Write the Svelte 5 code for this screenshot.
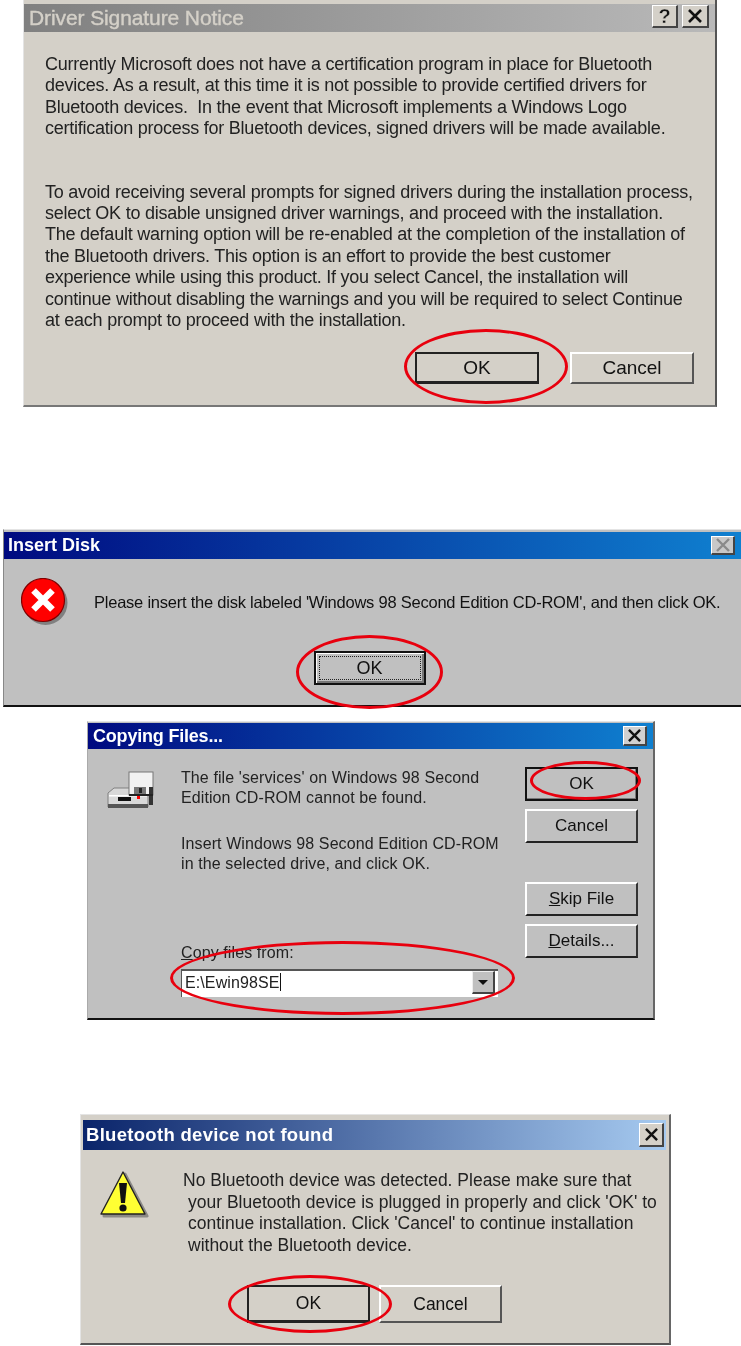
<script lang="ts">
  const signatureLines = [
    ['Currently Microsoft does not have a certification program in place for Bluetooth', 'devices. As a result, at this time it is not possible to provide certified drivers for', 'Bluetooth devices.  In the event that Microsoft implements a Windows Logo', 'certification process for Bluetooth devices, signed drivers will be made available.'],
    ['To avoid receiving several prompts for signed drivers during the installation process,', 'select OK to disable unsigned driver warnings, and proceed with the installation.', 'The default warning option will be re-enabled at the completion of the installation of', 'the Bluetooth drivers. This option is an effort to provide the best customer', 'experience while using this product. If you select Cancel, the installation will', 'continue without disabling the warnings and you will be required to select Continue', 'at each prompt to proceed with the installation.']
  ];
</script>

<main class="page">
  <!-- Driver signature notice -->
  <section class="dialog notice">
    <header class="title grey">
      <span>Driver Signature Notice</span>
      <div class="title-btns">
        <span class="cap help">?</span>
        <span class="cap close">
          <svg viewBox="0 0 16 14" width="16" height="14"><path d="M2 1 14 13M14 1 2 13" stroke="#111" stroke-width="2.6" /></svg>
        </span>
      </div>
    </header>
    <div class="notice-body">
      {#each signatureLines as para}
        <p>{#each para as line}{line}<br />{/each}</p>
      {/each}
    </div>
    <div class="notice-actions">
      <button class="btn default-soft">OK</button>
      <button class="btn soft">Cancel</button>
    </div>
    <span class="ring ring-notice"></span>
  </section>

  <!-- Insert disk -->
  <section class="dialog insert">
    <header class="title blue">
      <span>Insert Disk</span>
      <span class="cap disabled">
        <svg viewBox="0 0 16 14" width="16" height="14"><path d="M2 1 14 13M14 1 2 13" stroke="#8a8a8a" stroke-width="2.4" /></svg>
      </span>
    </header>
    <div class="insert-row">
      <svg class="err" viewBox="0 0 48 48" width="48" height="48">
        <circle cx="24.5" cy="25" r="22" fill="#808080" />
        <circle cx="22" cy="22" r="21.5" fill="#f00" stroke="#800000" stroke-width="1.2" />
        <path d="M12.5 12.5 31.5 31.5M31.5 12.5 12.5 31.5" stroke="#fff" stroke-width="6.5" />
      </svg>
      <p>Please insert the disk labeled 'Windows 98 Second Edition CD-ROM', and then click OK.</p>
    </div>
    <div class="insert-actions">
      <button class="btn focus"><span>OK</span></button>
    </div>
    <span class="ring ring-insert"></span>
  </section>

  <!-- Copying files -->
  <section class="dialog copying">
    <header class="title blue">
      <span>Copying Files...</span>
      <span class="cap">
        <svg viewBox="0 0 16 14" width="15" height="13"><path d="M2 1 14 13M14 1 2 13" stroke="#111" stroke-width="2.6" /></svg>
      </span>
    </header>
    <div class="copying-main">
      <svg class="drive" viewBox="0 0 48 38" width="48" height="38">
        <path d="M8 17h34v19H2V22z" fill="#d8d8d8" stroke="#808080" />
        <rect x="2" y="33" width="40" height="4" fill="#555" />
        <rect x="3" y="24" width="38" height="1.5" fill="#fff" />
        <rect x="12" y="26" width="13" height="4" fill="#111" />
        <rect x="23" y="1" width="24" height="23" fill="#f2f2f2" stroke="#777" />
        <rect x="28" y="16" width="12" height="8" fill="#777" />
        <rect x="33" y="17" width="3" height="5" fill="#222" />
        <rect x="43" y="16" width="4" height="18" fill="#333" />
        <rect x="23" y="23" width="24" height="2" fill="#222" />
        <rect x="31" y="25" width="3" height="3" fill="#f00" />
      </svg>
      <div class="copying-text">
        <p>The file 'services' on Windows 98 Second<br />Edition CD-ROM cannot be found.</p>
        <p>Insert Windows 98 Second Edition CD-ROM<br />in the selected drive, and click OK.</p>
        <label for="src"><u>C</u>opy files from:</label>
        <div class="combo">
          <span id="src">E:\Ewin98SE<i></i></span>
          <span class="arrow"><b></b></span>
        </div>
      </div>
      <div class="copying-actions">
        <button class="btn dark">OK</button>
        <button class="btn">Cancel</button>
        <button class="btn skip"><u>S</u>kip File</button>
        <button class="btn"><u>D</u>etails...</button>
      </div>
    </div>
    <span class="ring ring-ok"></span>
    <span class="ring ring-combo"></span>
  </section>

  <!-- Device not found -->
  <section class="dialog missing">
    <header class="title navy">
      <span>Bluetooth device not found</span>
      <span class="cap">
        <svg viewBox="0 0 16 14" width="15" height="13"><path d="M2 1 14 13M14 1 2 13" stroke="#111" stroke-width="2.6" /></svg>
      </span>
    </header>
    <div class="missing-row">
      <svg class="warn" viewBox="0 0 50 50" width="50" height="50">
        <path d="M26 4 48 46H5z" fill="#8c8a86" stroke="#8c8a86" stroke-width="3" stroke-linejoin="round" />
        <path d="M24 2 46 44H2z" fill="#ffff33" stroke="#222" stroke-width="1.4" stroke-linejoin="round" />
        <path d="M20 13h8l-2 20h-4z" fill="#111" />
        <circle cx="24" cy="38" r="3.6" fill="#111" />
      </svg>
      <p>
        No Bluetooth device was detected. Please make sure that<br />
        <span>your Bluetooth device is plugged in properly and click 'OK' to</span><br />
        <span>continue installation. Click 'Cancel' to continue installation</span><br />
        <span>without the Bluetooth device.</span>
      </p>
    </div>
    <div class="missing-actions">
      <button class="btn default-soft">OK</button>
      <button class="btn soft">Cancel</button>
    </div>
    <span class="ring ring-missing"></span>
  </section>
</main>

<style>
  :global(body) {
    margin: 0;
    background: #fff;
  }

  .page {
    width: 741px;
    height: 1346px;
    display: flex;
    flex-direction: column;
    overflow: hidden;
    font-family: "Liberation Sans", Arial, sans-serif;
    color: #111;
  }

  p {
    margin: 0;
  }

  svg {
    flex: none;
  }

  .dialog {
    position: relative;
    box-sizing: border-box;
    flex: none;
    background: #c0c0c0;
    border-top: 1px solid #e4e4e4;
    border-left: 1px solid #e4e4e4;
    border-right: 2px solid #444;
    border-bottom: 2px solid #222;
    filter: blur(0.45px);
  }

  .title {
    display: flex;
    align-items: center;
    justify-content: space-between;
    box-sizing: border-box;
    color: #fff;
    font-weight: 700;
    white-space: nowrap;
  }

  .blue {
    background: linear-gradient(90deg, #000a80, #0f80d0);
  }

  .grey {
    background: linear-gradient(90deg, #808080, #b9b9b9);
    color: #d4d0c8;
  }

  .navy {
    background: linear-gradient(90deg, #0a246a, #a6caf0);
  }

  .cap {
    display: flex;
    align-items: center;
    justify-content: center;
    box-sizing: border-box;
    background: #d4d0c8;
    border-top: 1px solid #fff;
    border-left: 1px solid #fff;
    border-right: 2px solid #444;
    border-bottom: 2px solid #444;
    color: #111;
    font-weight: 700;
  }

  .btn {
    box-sizing: border-box;
    display: flex;
    align-items: center;
    justify-content: center;
    padding: 0;
    background: #c0c0c0;
    border-top: 2px solid #fff;
    border-left: 2px solid #fff;
    border-right: 2px solid #333;
    border-bottom: 2px solid #222;
    border-radius: 0;
    font-family: inherit;
    color: #111;
  }

  .ring {
    position: absolute;
    box-sizing: border-box;
    border: 3px solid #e8000e;
    border-radius: 50%;
    pointer-events: none;
  }

  /* notice */
  .notice {
    width: 694px;
    height: 407px;
    margin-left: 23px;
    padding-top: 3px;
    background: #d4d0c8;
    border-right-color: #555;
    border-bottom-color: #777;
    border-top: 0;
  }

  .notice .title {
    height: 28px;
    margin-top: 1px;
    padding: 0 6px 0 5px;
    font-size: 21px;
    letter-spacing: -0.1px;
    font-weight: 400;
    -webkit-text-stroke: 0.4px #d4d0c8;
  }

  .title-btns {
    display: flex;
    gap: 4px;
    margin-bottom: 3px;
  }

  .notice .cap {
    width: 27px;
    height: 23px;
    font-size: 20px;
  }

  .notice .help {
    width: 26px;
  }

  .notice-body {
    padding: 22px 0 0 21px;
    font-size: 18px;
    line-height: 21.4px;
    letter-spacing: -0.24px;
    white-space: pre;
    color: #222;
  }

  .notice-body p + p {
    margin-top: 42px;
  }

  .notice-actions {
    display: flex;
    justify-content: flex-end;
    gap: 31px;
    padding: 21px 21px 0 0;
  }

  .notice-actions .btn {
    width: 124px;
    height: 32px;
    background: #d4d0c8;
    font-size: 19px;
  }

  .default-soft {
    border: 2px solid #222 !important;
    border-bottom-width: 3px !important;
  }

  .soft {
    border-right-color: #555 !important;
    border-bottom-color: #555 !important;
  }

  .ring-notice {
    left: 380px;
    top: 329px;
    width: 164px;
    height: 75px;
  }

  /* insert */
  .insert {
    width: 738px;
    height: 178px;
    margin: 122px 0 0 3px;
    padding-top: 2px;
    border-right: 0;
    border-left: 1px solid #888;
    border-bottom-color: #111;
  }

  .insert .title {
    height: 27px;
    padding: 0 6px 0 4px;
    font-size: 18px;
  }

  .insert .cap {
    width: 24px;
    height: 19px;
    background: #c8c8c8;
  }

  .insert-row {
    display: flex;
    align-items: center;
    height: 86px;
    padding-left: 17px;
    gap: 25px;
  }

  .insert-row p {
    font-size: 16.5px;
    letter-spacing: -0.235px;
    white-space: nowrap;
  }

  .insert-actions {
    display: flex;
    justify-content: center;
    margin: 6px 0 0 -6px;
  }

  .insert-actions .btn {
    width: 112px;
    height: 34px;
    font-size: 18px;
  }

  .focus {
    border: 2px solid #111;
    box-shadow: inset 1px 1px 0 #fff, inset -2px -2px 0 #777;
  }

  .focus span {
    width: 100px;
    height: 22px;
    line-height: 22px;
    border: 1px dotted #222;
    text-align: center;
  }

  .ring-insert {
    left: 292px;
    top: 105px;
    width: 147px;
    height: 74px;
  }

  /* copying */
  .copying {
    width: 568px;
    height: 299px;
    margin: 14px 0 0 87px;
    padding-top: 1px;
    border-left-color: #aaa;
    border-right-color: #666;
    border-bottom-color: #111;
  }

  .copying .title {
    height: 26px;
    padding: 0 6px 0 5px;
    font-size: 18px;
    letter-spacing: -0.2px;
  }

  .copying .cap {
    width: 24px;
    height: 20px;
    background: #d0d0d0;
  }

  .copying-main {
    display: flex;
    padding: 19px 0 0 18px;
  }

  .drive {
    margin: 3px 27px 0 0;
  }

  .copying-text {
    width: 317px;
    font-size: 16px;
    line-height: 20px;
    letter-spacing: 0.1px;
    white-space: nowrap;
    color: #222;
  }

  .copying-text p + p {
    margin-top: 26px;
  }

  .copying-text label {
    display: block;
    margin-top: 69px;
  }

  .combo {
    display: flex;
    align-items: center;
    justify-content: space-between;
    box-sizing: border-box;
    height: 28px;
    margin-top: 6px;
    padding: 0 3px 3px 3px;
    background: #fff;
    border-top: 2px solid #555;
    border-left: 1px solid #555;
  }

  .combo i {
    display: inline-block;
    width: 1px;
    height: 18px;
    margin-left: 1px;
    vertical-align: -3px;
    background: #111;
  }

  .arrow {
    display: flex;
    align-items: center;
    justify-content: center;
    box-sizing: border-box;
    width: 23px;
    height: 23px;
    background: #c0c0c0;
    border-top: 1px solid #eee;
    border-left: 1px solid #eee;
    border-right: 2px solid #444;
    border-bottom: 2px solid #444;
  }

  .arrow b {
    width: 0;
    height: 0;
    border-left: 5px solid transparent;
    border-right: 5px solid transparent;
    border-top: 5px solid #111;
  }

  .copying-actions {
    display: flex;
    flex-direction: column;
    gap: 8px;
    margin: -1px 0 0 27px;
  }

  .copying-actions .btn {
    width: 113px;
    height: 34px;
    font-size: 17px;
  }

  .copying-actions .skip {
    margin-top: 31px;
  }

  .dark {
    border: 2px solid #111;
    box-shadow: inset -1px -1px 0 #777;
  }

  .ring-ok {
    left: 442px;
    top: 39px;
    width: 111px;
    height: 39px;
  }

  .ring-combo {
    left: 82px;
    top: 219px;
    width: 345px;
    height: 74px;
  }

  /* missing */
  .missing {
    width: 591px;
    height: 231px;
    margin: 94px 0 0 80px;
    padding: 5px 3px 0 2px;
    background: #d4d0c8;
    border-right-color: #666;
    border-bottom-color: #555;
  }

  .missing .title {
    height: 30px;
    padding: 0 2px 0 3px;
    font-size: 18.5px;
    letter-spacing: 0.3px;
  }

  .missing .cap {
    width: 25px;
    height: 24px;
    background: #d4d0c8;
  }

  .missing-row {
    display: flex;
    padding: 20px 0 0 16px;
  }

  .warn {
    margin-right: 34px;
  }

  .missing-row p {
    font-size: 17.5px;
    line-height: 21.5px;
    letter-spacing: 0;
    white-space: nowrap;
    color: #222;
  }

  .missing-row span {
    margin-left: 5px;
  }

  .missing-actions {
    display: flex;
    gap: 9px;
    padding: 29px 0 0 164px;
  }

  .missing-actions .btn {
    width: 123px;
    height: 38px;
    background: #d4d0c8;
    font-size: 17.5px;
  }

  .ring-missing {
    left: 147px;
    top: 160px;
    width: 164px;
    height: 58px;
  }
</style>
